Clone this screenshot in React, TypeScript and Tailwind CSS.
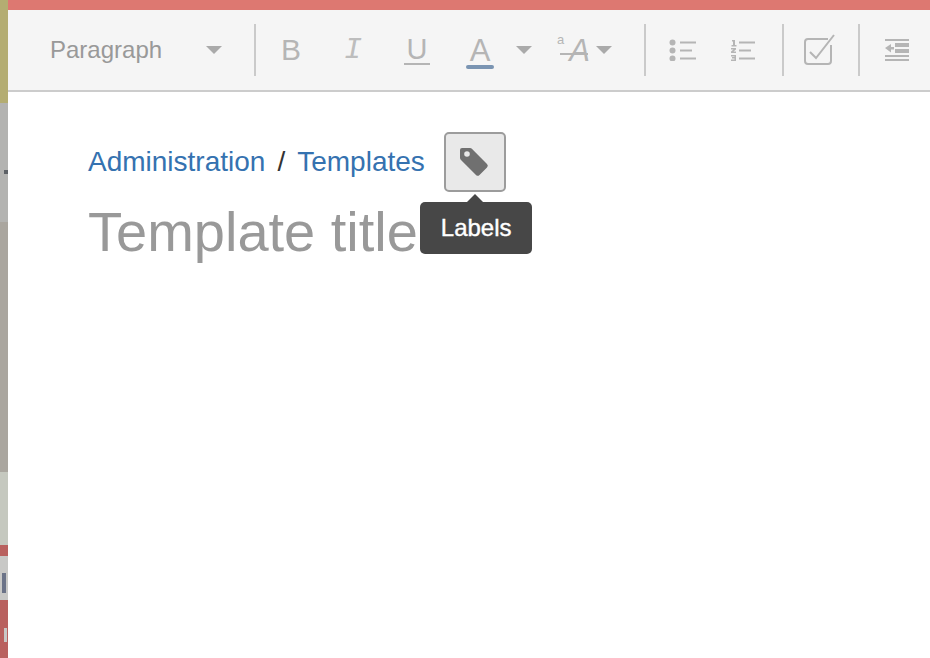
const sans = "font-['Liberation_Sans',Arial,sans-serif]";

function Separator() {
  return <div className="h-[52px] w-[2px] shrink-0 bg-[#cacaca]" />;
}

function Caret() {
  return <div className="h-0 w-0 border-x-[8px] border-t-[8px] border-x-transparent border-t-[#aaaaaa]" />;
}

function Cell({ width, children }: { width: string; children: React.ReactNode }) {
  return <div className={`flex shrink-0 items-center justify-center ${width}`}>{children}</div>;
}

// blurred desktop showing behind the editor window
function Sidebar() {
  return (
    <div className="flex w-2 shrink-0 flex-col">
      <div className="h-[103px] bg-[#b4ad72]" />
      <div className="flex h-[119px] flex-col items-end bg-[#b3b3b1] pt-[67px]">
        <div className="h-[4px] w-[4px] bg-[#5d6166]" />
      </div>
      <div className="h-[250px] bg-[#aaa69f]" />
      <div className="h-[73px] bg-[#c5c8bf]" />
      <div className="h-[11px] bg-[#b9615f]" />
      <div className="flex h-[44px] items-start bg-[#c8c8c6] pt-[17px] pl-[2px]">
        <div className="h-[20px] w-[4px] bg-[#6b7388]" />
      </div>
      <div className="h-[28px] bg-[#b9615f]" />
      <div className="flex flex-1 bg-[#b9615f]">
        <div className="h-full w-[4px]" />
        <div className="h-[14px] w-[3px] bg-[#c8c8c6]" />
      </div>
    </div>
  );
}

function BulletList() {
  return (
    <svg width="28" height="22" viewBox="0 0 28 22" fill="#b5b5b5">
      <circle cx="3.500" cy="3.500" r="3" />
      <circle cx="3.500" cy="11.500" r="3" />
      <circle cx="3.500" cy="19.500" r="3" />
      <rect x="11" y="2.500" width="16" height="2" />
      <rect x="11" y="10.500" width="12" height="2" />
      <rect x="11" y="18.500" width="16" height="2" />
    </svg>
  );
}

function NumberList() {
  return (
    <svg width="26" height="22" viewBox="0 0 26 22" fill="#b5b5b5">
      <path d="M2 1h3v5h1.500v1.500h-5V6H3V2.500H2z" />
      <path d="M1 9h5v1.500L3.500 12.500H6V14H1v-1.500L3.500 10.500H1z" />
      <path d="M1 16h5v6H1v-1.500h3.500v-1H2V18h2.500v-.5H1z" />
      <rect x="9" y="2.500" width="16" height="2" />
      <rect x="9" y="10.500" width="12" height="2" />
      <rect x="9" y="18.500" width="16" height="2" />
    </svg>
  );
}

function CheckBox() {
  return (
    <svg width="32" height="32" viewBox="0 0 32 32" fill="none" stroke="#b5b5b5" strokeWidth="2">
      <path d="M25 5H5a3 3 0 0 0-3 3v19a3 3 0 0 0 3 3h20a3 3 0 0 0 3-3V11" />
      <path d="M7 18l6 6L31 1" />
    </svg>
  );
}

function Outdent() {
  return (
    <svg width="24" height="22" viewBox="0 0 24 22" fill="#b5b5b5">
      <rect x="0" y="0" width="24" height="2" />
      <rect x="10" y="4" width="14" height="4" />
      <rect x="10" y="10" width="14" height="4" />
      <path d="M0 9l6-4v3h3v2.500H6v3z" />
      <rect x="0" y="16" width="24" height="2" />
      <rect x="0" y="20" width="24" height="2" />
    </svg>
  );
}

function TagIcon() {
  return (
    <svg width="32" height="32" viewBox="0 0 32 32" className="-translate-x-px">
      <path
        fillRule="evenodd"
        fill="#707070"
        d="M4 2h8a3 3 0 0 1 2.100.9L29 18a2.500 2.500 0 0 1 0 3.500l-7.500 7.500a2.500 2.500 0 0 1-3.500 0L3 14a3 3 0 0 1-1-2.200V4a2 2 0 0 1 2-2zM9 5.200a2.800 2.800 0 1 0 0 5.600 2.800 2.800 0 0 0 0-5.600z"
      />
    </svg>
  );
}

function Toolbar() {
  return (
    <div className="flex h-[82px] items-center border-b-2 border-[#cccccc] bg-[#f5f5f5] pl-[42px] text-[#b5b5b5]">
      <span className="w-[156px] shrink-0 text-[24px] text-[#999999]">Paragraph</span>
      <Caret />
      <div className="w-[32px] shrink-0" />
      <Separator />
      <Cell width="w-[70px]">
        <span className="text-[30px] leading-none">B</span>
      </Cell>
      <Cell width="w-[54px]">
        <span className="font-['Liberation_Mono',monospace] text-[30px] leading-none text-[#bdbdbd] italic">I</span>
      </Cell>
      <Cell width="w-[74px]">
        <span className="border-b-2 border-[#b5b5b5] px-[3px] text-[29px] leading-[27px]">U</span>
      </Cell>
      <Cell width="w-[52px]">
        <span className="relative text-[31px] leading-none">
          A
          <span className="absolute top-[30px] left-[-4px] h-[4px] w-[28px] rounded-full bg-[#7a94b2]" />
        </span>
      </Cell>
      <Cell width="w-[36px]">
        <Caret />
      </Cell>
      <div className="flex w-[102px] shrink-0 items-center pl-[16px]">
        <span className="relative flex w-[38px] justify-end text-[31px] leading-none italic">
          <span className="absolute top-[-2px] left-[-1px] text-[13px] leading-none not-italic">a</span>
          <span className="mr-[6px]">A</span>
          <span className="absolute top-[18px] left-[2px] h-[2px] w-[28px] bg-[#b5b5b5]" />
        </span>
        <Caret />
      </div>
      <Separator />
      <Cell width="w-[74px]">
        <BulletList />
      </Cell>
      <Cell width="w-[46px]">
        <NumberList />
      </Cell>
      <div className="w-[16px] shrink-0" />
      <Separator />
      <Cell width="w-[70px]">
        <CheckBox />
      </Cell>
      <div className="w-[4px] shrink-0" />
      <Separator />
      <Cell width="w-[73px]">
        <Outdent />
      </Cell>
    </div>
  );
}

export default function App() {
  return (
    <div className={`flex h-[658px] w-[930px] overflow-hidden bg-white ${sans}`}>
      <Sidebar />
      <div className="flex min-w-0 flex-1 flex-col">
        <div className="h-[10px] shrink-0 bg-[#dd7871]" />
        <Toolbar />
        <div className="pt-[40px] pl-[80px]">
          <div className="flex items-center">
            <a className="text-[28px] leading-[60px] text-[#3572b0]">Administration</a>
            <span className="mx-[12px] text-[28px] leading-[60px] text-[#333333]">/</span>
            <a className="w-[127px] text-[28px] leading-[60px] whitespace-nowrap text-[#3572b0]">Templates</a>
            <div className="relative ml-[20px]">
              <div className="flex h-[60px] w-[62px] items-center justify-center rounded-[5px] border-2 border-[#9c9c9c] bg-[#e9e9e9]">
                <TagIcon />
              </div>
              <div className="absolute top-[62px] left-[23px] h-0 w-0 border-x-[8px] border-b-[8px] border-x-transparent border-b-[#474747]" />
              <div className="absolute top-[70px] left-[-24px] z-10 flex h-[52px] w-[112px] items-center justify-center rounded-[5px] bg-[#474747] text-[24px] text-white [-webkit-text-stroke:0.4px_white]">
                Labels
              </div>
            </div>
          </div>
          <div className="mt-[5px] text-[56px] leading-[70px] text-[#999999]">Template title</div>
        </div>
      </div>
    </div>
  );
}
